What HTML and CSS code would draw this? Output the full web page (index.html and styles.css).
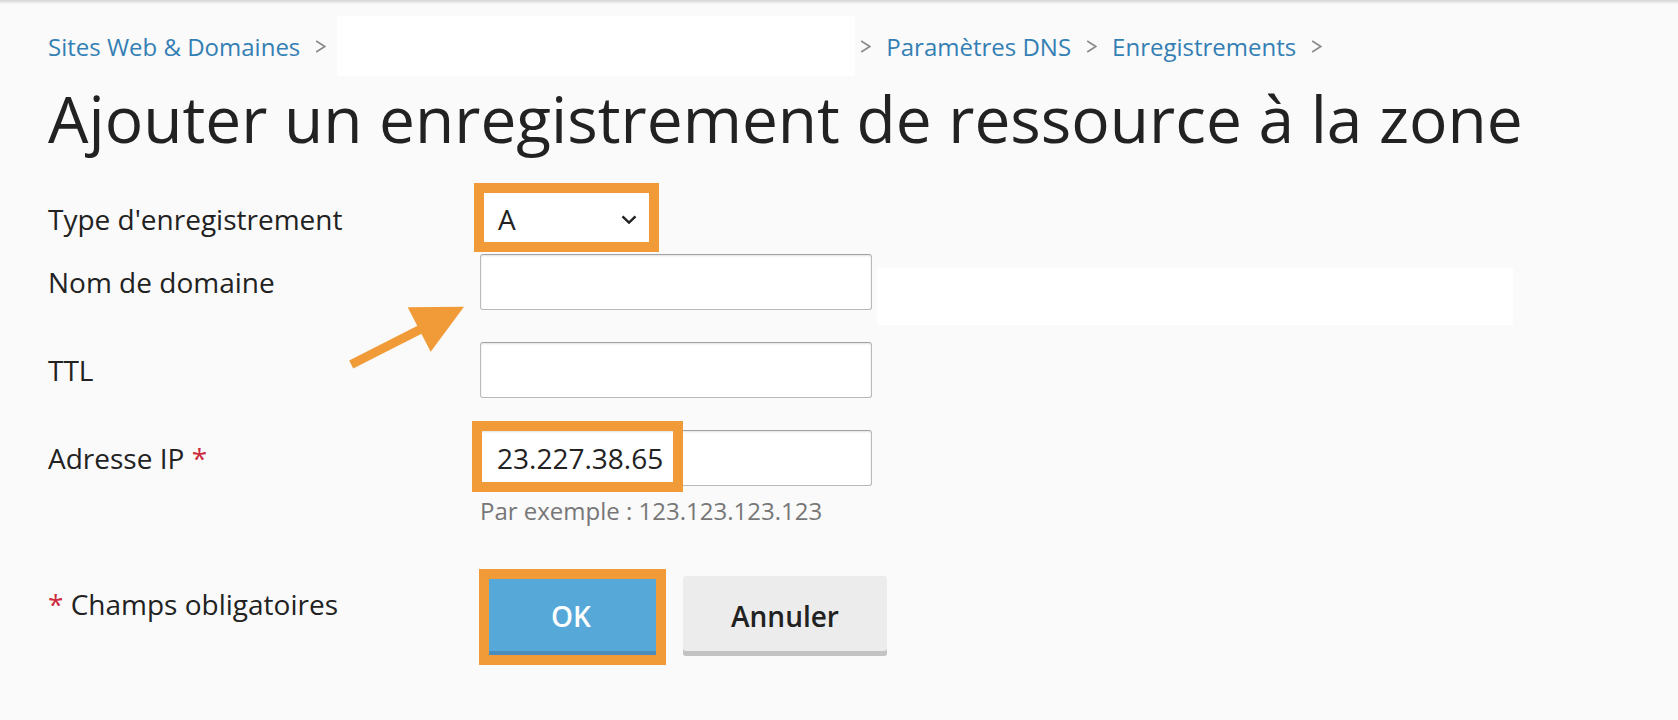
FILE: index.html
```html
<!DOCTYPE html>
<html lang="fr">
<head>
<meta charset="utf-8">
<title>Ajouter un enregistrement de ressource à la zone</title>
<link rel="stylesheet" href="styles.css">
</head>
<body>
<div class="topbar"></div>
<div class="page">
  <nav class="crumbs">
    <a class="crumb" href="#">Sites Web &amp; Domaines</a>
    <svg class="chev" viewBox="0 0 11 13"><path d="M1.2 1 L9.8 6.5 L1.2 12"/></svg>
    <span class="redact redact-crumb"></span>
    <svg class="chev" viewBox="0 0 11 13"><path d="M1.2 1 L9.8 6.5 L1.2 12"/></svg>
    <a class="crumb" href="#">Paramètres DNS</a>
    <svg class="chev" viewBox="0 0 11 13"><path d="M1.2 1 L9.8 6.5 L1.2 12"/></svg>
    <a class="crumb" href="#">Enregistrements</a>
    <svg class="chev" viewBox="0 0 11 13"><path d="M1.2 1 L9.8 6.5 L1.2 12"/></svg>
  </nav>

  <h1 class="title">Ajouter un enregistrement de ressource à la zone</h1>

  <form class="form">
    <div class="row row-type">
      <label class="label">Type d'enregistrement</label>
      <div class="wrap">
        <div class="select"><span>A</span><svg class="caret" viewBox="0 0 16 9"><path d="M1.5 1.3 L8 7.6 L14.5 1.3"/></svg></div>
        <span class="mark mark-select"></span>
      </div>
    </div>

    <div class="row row-name">
      <label class="label">Nom de domaine</label>
      <input class="input" type="text">
      <span class="redact redact-name"></span>
    </div>

    <div class="row row-ttl">
      <label class="label">TTL</label>
      <input class="input" type="text">
    </div>

    <div class="row row-ip">
      <label class="label">Adresse IP <span class="req">*</span></label>
      <div class="wrap">
        <input class="input input-ip" type="text" value="23.227.38.65">
        <span class="mark mark-ip"></span>
      </div>
    </div>
    <div class="hint">Par exemple : 123.123.123.123</div>

    <div class="row row-actions">
      <div class="label label-req"><span class="req">*</span> Champs obligatoires</div>
      <div class="wrap">
        <button class="btn btn-primary" type="button">OK</button>
        <span class="mark mark-ok"></span>
      </div>
      <button class="btn btn-default" type="button">Annuler</button>
    </div>
  </form>
</div>

<svg class="arrow" viewBox="0 0 130 75">
  <line x1="11.2" y1="64.5" x2="82" y2="28.5"/>
  <polygon points="67.7,7.3 124,6.7 90.7,51.7"/>
</svg>
</body>
</html>
```

FILE: styles.css
```css
html, body {
  margin: 0;
  padding: 0;
}

body {
  background: #fafafa;
  font-family: "Open Sans", "Liberation Sans", sans-serif;
  color: #222;
  position: relative;
  min-height: 720px;
}

.topbar {
  height: 4px;
  background: linear-gradient(#d2d2d2, #fafafa);
}

.page {
  padding-left: 48px;
}

/* breadcrumbs */
.crumbs {
  display: flex;
  align-items: center;
  margin-top: 12px;
  font-size: 24px;
  line-height: 33px;
}

.crumb {
  color: #347fb4;
  text-decoration: none;
}

.chev {
  flex: none;
  width: 11px;
  height: 13px;
  margin: 0 15px;
  fill: none;
  stroke: #8a8a8a;
  stroke-width: 1.6;
}

.redact {
  background: #fff;
  flex: none;
}

.redact-crumb {
  width: 518px;
  height: 60px;
  margin: 0 -10px 0 -4px;
}

/* heading */
.title {
  margin: 4px 0 0;
  font-size: 64px;
  line-height: 77px;
  font-weight: 400;
  color: #222;
}

/* form */
.form {
  margin: 0;
}

.row {
  display: flex;
  align-items: center;
}

.label {
  flex: none;
  width: 432px;
  font-size: 28px;
  line-height: 38px;
  color: #222;
}

.req {
  color: #cc2c3d;
}

.row-type { margin-top: 34px; }
.row-name { margin-top: 7px; }
.row-ttl { margin-top: 32px; }
.row-ip { margin-top: 32px; }

.wrap {
  position: relative;
  flex: none;
}

.select {
  box-sizing: border-box;
  width: 170px;
  height: 56px;
  display: flex;
  align-items: center;
  justify-content: space-between;
  padding: 0 12px 0 17px;
  background: #fff;
  border: 1px solid #b5b5b5;
  border-radius: 3px;
  font-size: 28px;
  color: #222;
}

.caret {
  width: 16px;
  height: 9px;
  fill: none;
  stroke: #222;
  stroke-width: 2.4;
}

.input {
  box-sizing: border-box;
  flex: none;
  width: 392px;
  height: 56px;
  margin: 0;
  padding: 0 16px;
  background: #fff;
  border: 1px solid #b9b9b9;
  border-top-color: #a3a3a3;
  border-radius: 3px;
  box-shadow: inset 0 1px 2px rgba(0, 0, 0, 0.12);
  font-family: "Open Sans", "Liberation Sans", sans-serif;
  font-size: 28px;
  color: #222;
  outline: none;
}

.input-ip {
  display: block;
}

.redact-name {
  width: 636px;
  height: 57px;
  margin: 14px 0 -15px 5px;
  align-self: flex-start;
}

.hint {
  margin: 8px 0 0 432px;
  font-size: 24px;
  line-height: 33px;
  color: #777;
}

.row-actions {
  margin-top: 49px;
  align-items: flex-start;
}

.label-req {
  margin-top: 9px;
}

.btn {
  box-sizing: border-box;
  height: 80px;
  margin: 0;
  padding: 0;
  border: 0;
  border-radius: 3px;
  display: flex;
  align-items: center;
  justify-content: center;
  font-family: "Open Sans", "Liberation Sans", sans-serif;
  font-size: 28px;
  font-weight: 600;
}

.btn-primary {
  width: 182px;
  background: #56a8d9;
  color: #fff;
  box-shadow: inset 0 -5px 0 #4a8dbd;
}

.btn-default {
  width: 204px;
  margin-left: 21px;
  background: #ececec;
  color: #222;
  box-shadow: inset 0 -5px 0 #c3c3c3;
}

/* orange annotation highlights */
.mark {
  position: absolute;
  box-sizing: border-box;
  border: 10px solid #f19b38;
  pointer-events: none;
}

.mark-select {
  left: -6px;
  top: -8px;
  width: 185px;
  height: 69px;
}

.mark-ip {
  left: -8px;
  top: -9px;
  width: 211px;
  height: 71px;
}

.mark-ok {
  left: -1px;
  top: -7px;
  width: 187px;
  height: 96px;
}

.arrow {
  position: absolute;
  left: 340px;
  top: 300px;
  width: 130px;
  height: 75px;
  overflow: visible;
}

.arrow line {
  stroke: #f19b38;
  stroke-width: 9;
}

.arrow polygon {
  fill: #f19b38;
}
```
